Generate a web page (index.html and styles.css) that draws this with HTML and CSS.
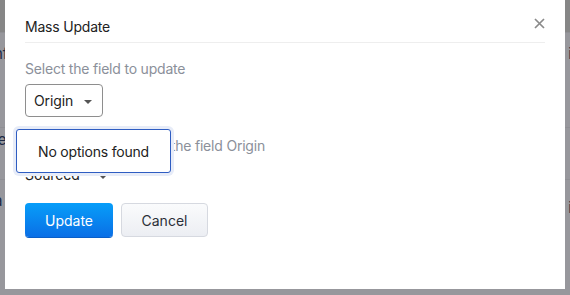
FILE: index.html
```
<!DOCTYPE html>
<html lang="en">
<head>
    <meta charset="UTF-8">
    <meta name="viewport" content="width=device-width, initial-scale=1.0">
    <title>Mass Update</title>
    <link rel="stylesheet" href="styles.css">
</head>
<body>

<div class="page">
    <div class="page-top"></div>
    <div class="page-row r1"><span class="frag">nf</span><span class="frag right">i</span></div>
    <div class="page-row r2"><span class="frag">le</span></div>
    <div class="page-row r3"><span class="frag">a</span><span class="frag right">i</span></div>
</div>

<div class="modal">
    <div class="modal-head">
        <span class="modal-title">Mass Update</span>
        <svg class="modal-close" width="11" height="11" viewBox="0 0 11 11">
            <path d="M1 1L10 10M10 1L1 10" stroke="#8a8a8a" stroke-width="1.7"/>
        </svg>
    </div>
    <div class="modal-body">
        <div class="label">Select the field to update</div>
        <div class="select boxed">Origin <span class="caret"></span></div>
        <div class="label second">Select a new value for the field Origin</div>
        <div class="select plain">Sourced <span class="caret"></span></div>
        <div class="actions">
            <button class="btn btn-primary">Update</button>
            <button class="btn btn-cancel">Cancel</button>
        </div>
    </div>
    <div class="popup">No options found</div>
</div>

</body>
</html>
```

FILE: styles.css
```
* {
    box-sizing: border-box;
}
body {
    margin: 0;
    height: 295px;
    overflow: hidden;
    font-family: Inter, "Noto Sans", sans-serif;
    background: #97979c;
}
.page-top {
    height: 32px;
    background: #868686;
}
.page-row {
    display: flex;
    justify-content: space-between;
    border-top: 1px solid #8f8f94;
    font-size: 15px;
    line-height: 17px;
    color: #1e2a44;
}
.r1 { height: 95px; padding-top: 12px; }
.r2 { height: 52px; padding-top: 3px; }
.r3 { height: 115px; padding-top: 12px; }
.r3 .right { margin-top: 7px; }
.frag {
    margin-left: -6px;
}
.frag.right {
    margin-left: 0;
    margin-right: -2px;
}
.modal {
    position: absolute;
    left: 5px;
    top: 0;
    width: 560px;
    height: 289px;
    background: #fff;
    padding: 0 20px;
}
.modal-head {
    display: flex;
    justify-content: space-between;
    align-items: center;
    height: 43px;
    padding-top: 11px;
    border-bottom: 1px solid #eeeeee;
}
.modal-title {
    font-size: 14px;
    color: #222;
    letter-spacing: -0.2px;
}
.modal-close {
    margin-top: -6px;
}
.modal-body {
    padding-top: 17px;
}
.label {
    font-size: 14px;
    color: #8b909a;
    line-height: 18px;
    letter-spacing: -0.2px;
}
.label.second {
    margin-top: 20px;
}
.select {
    display: inline-flex;
    align-items: center;
    font-size: 14px;
    color: #222;
    letter-spacing: -0.1px;
}
.select.boxed {
    margin-top: 6px;
    height: 33px;
    width: 78px;
    padding-left: 8px;
    border: 1px solid #8e8e8e;
    border-radius: 4px;
}
.select.plain {
    margin-top: 9px;
    height: 20px;
}
.caret {
    width: 0;
    height: 0;
    margin-left: 11px;
    margin-top: 2px;
    border-left: 4px solid transparent;
    border-right: 4px solid transparent;
    border-top: 4px solid #555;
}
.select.plain .caret {
    margin-left: 19px;
    margin-top: 6px;
}
.actions {
    display: flex;
    gap: 8px;
    margin-top: 19px;
}
.btn {
    height: 34px;
    border-radius: 4px;
    font-family: inherit;
    font-size: 14px;
    cursor: pointer;
}
.btn-primary {
    width: 88px;
    border: none;
    color: #fff;
    background: linear-gradient(#079ef9, #0a6fe6);
    box-shadow: 0 1px 0 #0a5fc8;
}
.btn-cancel {
    width: 87px;
    color: #2b2f38;
    border: 1px solid #d6d9e0;
    background: linear-gradient(#fafbfc, #eceef3);
}
.popup {
    position: absolute;
    left: 11px;
    top: 129px;
    width: 155px;
    height: 44px;
    display: flex;
    align-items: center;
    justify-content: center;
    background: #fff;
    border: 1px solid #2f5dc2;
    border-radius: 3px;
    box-shadow: 0 0 0 3px #e7ecf8;
    font-size: 14px;
    color: #222;
    letter-spacing: -0.2px;
}
```
